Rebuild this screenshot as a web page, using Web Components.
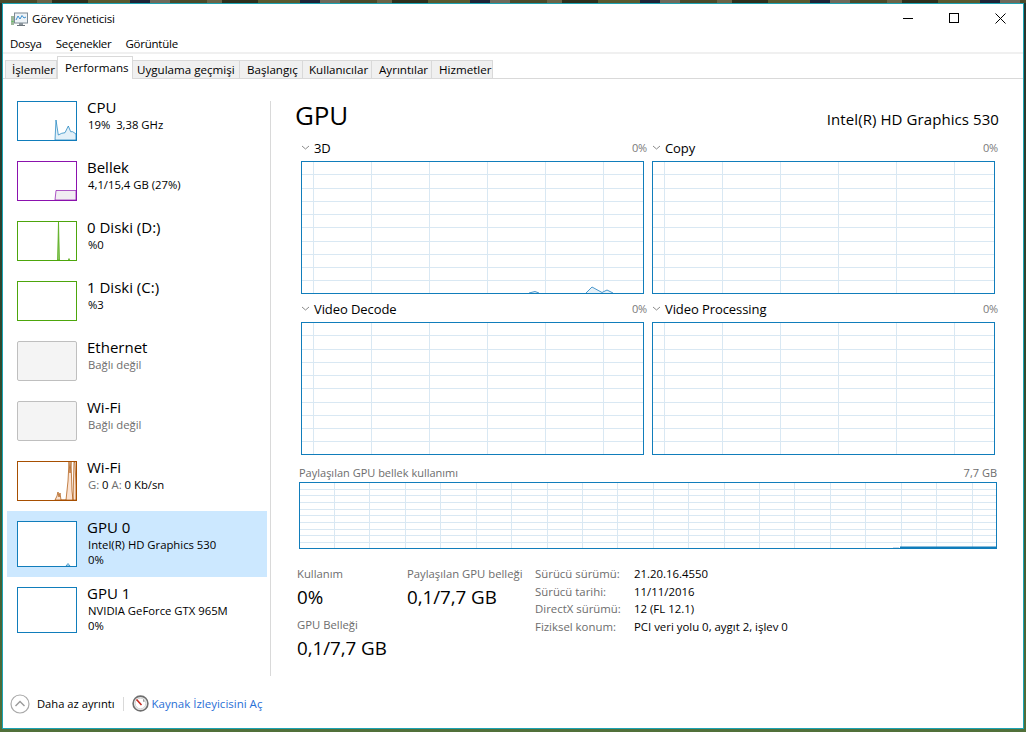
<!DOCTYPE html>
<html lang="tr"><head><meta charset="utf-8"><title>Görev Yöneticisi</title>
<style>
html,body{margin:0;height:732px;overflow:hidden}
body{background:
 repeating-linear-gradient(90deg,#4b4a2a 0 37px,#6b6448 37px 52px,#2e2f1c 52px 88px,#5a5a30 88px 130px,#1f2436 130px 150px,#6f6a5c 150px 170px) top/100% 3px no-repeat,
 linear-gradient(#26332c,#2f4a2e 50%,#51703a 100%);font-family:"Open Sans","Noto Sans",sans-serif;color:#000}
</style></head><body>
<tm-window>
  <tm-titlebar slot="title">Görev Yöneticisi</tm-titlebar>
  <tm-menubar slot="menu"><span>Dosya</span><span>Seçenekler</span><span>Görüntüle</span></tm-menubar>
  <tm-tabs slot="tabs">
    <tm-tab w="52" pad="6">İşlemler</tm-tab><tm-tab w="76" pad="7" active>Performans</tm-tab><tm-tab w="107" pad="4">Uygulama geçmişi</tm-tab><tm-tab w="63" pad="7">Başlangıç</tm-tab><tm-tab w="69" pad="6">Kullanıcılar</tm-tab><tm-tab w="60" pad="7">Ayrıntılar</tm-tab><tm-tab w="61" pad="7">Hizmetler</tm-tab>
  </tm-tabs>
  <tm-sidebar slot="side">
    <tm-item name="CPU" color="#117dbb" fill="#e3f0f8" shape="M38 39L39 19L41.3 34L44.7 32.3L48 31.7L51.3 25L53.7 30.7L55.7 30.7L59 33L59 39Z"><span>19%&nbsp; 3,38 GHz</span></tm-item>
    <tm-item name="Bellek" color="#8b12ae" fill="#f1edf2" shape="M38 39L39 29.5L59 29.5L59 39Z"><span>4,1/15,4 GB (27%)</span></tm-item>
    <tm-item name="0 Diski (D:)" color="#4da60c" fill="#8cc865" shape="M40.5 39L41.5 1L42.5 39Z M51.5 39L52 37.5L52.5 39Z"><span>%0</span></tm-item>
    <tm-item name="1 Diski (C:)" color="#4da60c"><span>%3</span></tm-item>
    <tm-item name="Ethernet" off><span class="g">Bağlı değil</span></tm-item>
    <tm-item name="Wi-Fi" off><span class="g">Bağlı değil</span></tm-item>
    <tm-item name="Wi-Fi" color="#a74f01" fill="#fbe3d2" shape="M38 39L40 35L41 31L42 36L43 32L44 39L49 39L51 20L52 1L53 12L54 1L55 30L56 39L57 1L58 1L59 25L59 39Z"><span><span class="g">G:</span> 0 <span class="g">A:</span> 0 Kb/sn</span></tm-item>
    <tm-item name="GPU 0" color="#117dbb" tall selected fill="#d9ebf5" shape="M49 45L51 42.5L53 45Z"><span>Intel(R) HD Graphics 530</span><span>0%</span></tm-item>
    <tm-item name="GPU 1" color="#117dbb" tall><span>NVIDIA GeForce GTX 965M</span><span>0%</span></tm-item>
  </tm-sidebar>
  <tm-gpu slot="main">
    <tm-head><span slot="a">GPU</span><span slot="b">Intel(R) HD Graphics 530</span></tm-head>
    <tm-grid>
      <tm-chart label="3D" line="M228 132L234 130.5L238 132M285 132L291 126L301 131.5L306 129L312 132"></tm-chart>
      <tm-chart label="Copy"></tm-chart>
      <tm-chart label="Video Decode"></tm-chart>
      <tm-chart label="Video Processing"></tm-chart>
    </tm-grid>
    <tm-shared></tm-shared>
    <tm-stats>
      <tm-stat label="Kullanım" value="0%"></tm-stat>
      <tm-stat label="Paylaşılan GPU belleği" value="0,1/7,7 GB"></tm-stat>
      <tm-stat label="GPU Belleği" value="0,1/7,7 GB"></tm-stat>
      <tm-info>
        <span class="k">Sürücü sürümü:</span><span>21.20.16.4550</span>
        <span class="k">Sürücü tarihi:</span><span>11/11/2016</span>
        <span class="k">DirectX sürümü:</span><span>12 (FL 12.1)</span>
        <span class="k">Fiziksel konum:</span><span>PCI veri yolu 0, aygıt 2, işlev 0</span>
      </tm-info>
    </tm-stats>
  </tm-gpu>
  <tm-footer slot="foot"></tm-footer>
</tm-window>
<script>
function def(name,css,html,init){
  customElements.define(name,class extends HTMLElement{
    connectedCallback(){
      if(this.shadowRoot)return;
      const r=this.attachShadow({mode:"open"});
      r.innerHTML="<style>"+css+"</style>"+(typeof html==="function"?html(this):html);
      if(init)init(this,r);
    }
  });
}
const attr=(e,n,d="")=>e.hasAttribute(n)?e.getAttribute(n):d;

def("tm-window",`:host{display:flex;flex-direction:column;box-sizing:border-box;width:1022px;height:726px;margin:3px 0 0 2px;background:#fff;border:1px solid #1ba3b3}
.body{flex:1;display:flex;min-height:0}`,
`<slot name="title"></slot><slot name="menu"></slot><slot name="tabs"></slot><div class="body"><slot name="side"></slot><slot name="main"></slot></div><slot name="foot"></slot>`);

def("tm-titlebar",`:host{display:flex;align-items:center;height:30px;flex:none}
.ic{margin:0 4px 0 8px;flex:none}
.t{flex:1;font-size:11.5px;letter-spacing:-.2px;margin-top:-1px}
.b{width:46px;height:30px;display:flex;align-items:center;justify-content:center;flex:none}
.b svg{display:block;margin-top:-2px}`,
`<svg class="ic" width="17" height="15" viewBox="0 0 17 15"><rect x="0" y="4" width="3" height="9" fill="#9db89a"/><rect x="0.5" y="9" width="2" height="1" fill="#5fbf5f"/><rect x="3.5" y="1" width="13" height="10" fill="#eef3f7" stroke="#7d8a94"/><path d="M5 8L7 4L9 7L11 3.5L13 6L15 5" fill="none" stroke="#3a8fd0" stroke-width="1"/><rect x="8" y="11" width="4" height="2" fill="#8a949c"/><rect x="6" y="13" width="8" height="1" fill="#6d767c"/></svg>
<span class="t"><slot></slot></span>
<span class="b"><svg width="10" height="10"><path d="M0 5.5H10" stroke="#000"/></svg></span>
<span class="b"><svg width="10" height="10"><rect x=".5" y=".5" width="9" height="9" fill="none" stroke="#000"/></svg></span>
<span class="b"><svg width="11" height="11"><path d="M.5.5L10.5 10.5M10.5.5L.5 10.5" stroke="#000" fill="none"/></svg></span>`);

def("tm-menubar",`:host{display:flex;flex:none;height:20px;box-sizing:border-box;align-items:center;padding:1px 0 0 7px;gap:14px;font-size:11.5px;letter-spacing:-.25px;border-bottom:2px solid #f0f0f0}`,`<slot></slot>`);

def("tm-tabs",`:host{display:flex;flex:none;height:23px;box-sizing:border-box;padding:0 0 0 2px;margin-top:2px;border-bottom:1px solid #d9d9d9;align-items:flex-end}`,`<slot></slot>`);

def("tm-tab",`:host{display:flex;align-items:center;box-sizing:border-box;height:18px;padding-bottom:1px;background:#f0f0f0;border:1px solid #d9d9d9;border-bottom:0;border-left:0;font-size:11.6px;white-space:nowrap}
:host(:first-child){border-left:1px solid #d9d9d9}
:host([active]){height:23px;margin-bottom:-1px;background:#fff;border-left:1px solid #d9d9d9;padding-bottom:1px;position:relative}`,`<slot></slot>`,
(e)=>{e.style.width=attr(e,"w")+"px";e.style.paddingLeft=attr(e,"pad","6")+"px"});

def("tm-sidebar",`:host{display:block;flex:none;box-sizing:border-box;width:267px;padding:12px 0 0 4px}`,`<slot></slot>`);

def("tm-item",`:host{display:flex;box-sizing:border-box;width:260px;height:60px;padding:10px;gap:10px;align-items:flex-start}
:host([tall]){height:66px}
:host([selected]){background:#cce8ff}
.th{width:60px;height:40px;flex:none;display:block}
:host([tall]) .th{height:46px}
.tx{display:flex;flex-direction:column;min-width:0;margin-top:-4px}
.n{font-size:15px;line-height:20px}
.s{font-size:11.3px;line-height:15px;display:flex;flex-direction:column;margin-left:1px;white-space:nowrap}
::slotted(span){display:block}`,
(e)=>{
 const h=e.hasAttribute("tall")?46:40,off=e.hasAttribute("off");
 const c=off?"#bfbfbf":attr(e,"color"),bg=off?"#f4f4f4":"#fff",sh=attr(e,"shape");
 return `<svg class="th" viewBox="0 0 60 ${h}" width="60" height="${h}"><rect x=".5" y=".5" width="59" height="${h-1}" rx="${off?1.5:0}" fill="${bg}" stroke="${c}"/>${sh?`<path d="${sh}" fill="${attr(e,"fill")}" stroke="${c}" stroke-width=".7"/>`:""}</svg>
 <div class="tx"><div class="n">${attr(e,"name")}</div><div class="s" part="sub"><slot></slot></div></div>`;
});
document.head.insertAdjacentHTML("beforeend","<style>tm-item .g{color:#6d6d6d}tm-item span span{display:inline}</style>");

def("tm-gpu",`:host{display:block;flex:1;min-width:0;margin:22px 0 13px 0;padding:0 0 0 25px;border-left:1px solid #d9d9d9;box-sizing:border-box}`,`<slot></slot>`);

def("tm-head",`:host{display:flex;justify-content:space-between;align-items:baseline;padding-right:24px;height:39px;margin-top:-1px}
.a{font-size:26px;line-height:30px;letter-spacing:-.2px;margin-left:-1px}
.b{font-size:15px;letter-spacing:.08px}`,
`<span class="a"><slot name="a"></slot></span><span class="b"><slot name="b"></slot></span>`);

def("tm-grid",`:host{display:grid;grid-template-columns:343px 343px;column-gap:8px;row-gap:6px;margin-left:5px}`,`<slot></slot>`);

function gridSvg(w,h,vOff,vStep,hStep,color,extra){
  let s="";
  for(let x=vOff;x<w-1;x+=vStep)s+=`<path d="M${Math.round(x)+.5} 1V${h-1}"/>`;
  for(let y=hStep;y<h-1;y+=hStep)s+=`<path d="M1 ${Math.round(y)+.5}H${w-1}"/>`;
  return `<svg width="${w}" height="${h}" viewBox="0 0 ${w} ${h}" style="display:block"><g stroke="#d9e8f3" fill="none">${s}</g>${extra||""}<rect x=".5" y=".5" width="${w-1}" height="${h-1}" fill="none" stroke="${color}"/></svg>`;
}

def("tm-chart",`:host{display:block}
.h{display:flex;align-items:flex-start;height:22px;line-height:18px;box-sizing:border-box}
.c{width:13px;flex:none}
.l{flex:1;font-size:13px;letter-spacing:-.08px}
.p{font-size:11px;color:#7a7a7a;margin-right:-3px;letter-spacing:-.2px;line-height:18px}`,
(e)=>`<div class="h"><svg class="c" width="13" height="18" viewBox="0 0 13 18"><path d="M1 7L4.5 10L8 7" fill="none" stroke="#8a8a8a"/></svg><span class="l">${attr(e,"label")}</span><span class="p">0%</span></div>`+
 gridSvg(343,133,12,58,13.25,"#117dbb",attr(e,"line")?`<path d="${attr(e,"line")}" fill="#e6f1f8" stroke="#4a97cc"/>`:""));

def("tm-shared",`:host{display:block;margin:11px 0 0 3px;width:698px}
.h{display:flex;justify-content:space-between;height:16px;line-height:14px;font-size:11px;color:#6d6d6d}`,
()=>`<div class="h"><span>Paylaşılan GPU bellek kullanımı</span><span>7,7 GB</span></div>`+
 gridSvg(698,67,35,35.42,6.65,"#117dbb",`<path d="M594 65.5H600" stroke="#c8dced" stroke-width="1"/><path d="M601 65.5H697" stroke="#117dbb" stroke-width="2"/>`));

def("tm-stats",`:host{display:grid;grid-template-columns:110px 128px 1fr;grid-template-rows:51px 50px;margin:16px 0 0 1px}`,`<slot></slot>`);

def("tm-stat",`:host{display:block}
.l{font-size:11.3px;line-height:18px;color:#6d6d6d;white-space:nowrap}
.v{font-size:18.8px;line-height:28px;letter-spacing:-.05px;white-space:nowrap}`,
(e)=>`<div class="l">${attr(e,"label")}</div><div class="v">${attr(e,"value")}</div>`);

def("tm-info",`:host{display:grid;grid-template-columns:99px auto;grid-auto-rows:17.6px;grid-column:3;grid-row:1 / span 2;font-size:11.4px;line-height:18px;align-content:start;white-space:nowrap}`,`<slot></slot>`);
document.head.insertAdjacentHTML("beforeend","<style>tm-info .k{color:#6d6d6d}</style>");

def("tm-footer",`:host{display:flex;flex:none;height:39px;align-items:center;padding:0 0 10px 7px;box-sizing:border-box;font-size:11.5px}
.d{width:1px;height:14px;background:#d9d9d9;margin:0 8px}
a{color:#2a6fd6;text-decoration:none;margin-left:3px}
.t{margin-left:7px;font-size:11.2px}
svg{flex:none;display:block}`,
`<svg width="20" height="20" viewBox="0 0 20 20"><circle cx="10" cy="10" r="9" fill="#fff" stroke="#a9a9a9" stroke-width="1.2"/><path d="M5.5 12L10 7.5L14.5 12" fill="none" stroke="#9a9a9a" stroke-width="1.4"/></svg>
<span class="t">Daha az ayrıntı</span><span class="d"></span>
<svg width="17" height="17" viewBox="0 0 17 17"><circle cx="8.5" cy="8.5" r="7.4" fill="#eee" stroke="#6e6e6e" stroke-width="1.6"/><circle cx="8.5" cy="8.5" r="5.3" fill="#fff" stroke="#bbb" stroke-width=".6"/><path d="M4.5 4.5L9.5 10" stroke="#c8281e" stroke-width="1.6"/><path d="M11.5 4.5L12 7" stroke="#888"/></svg>
<a>Kaynak İzleyicisini Aç</a>`);
</script>
</body></html>
